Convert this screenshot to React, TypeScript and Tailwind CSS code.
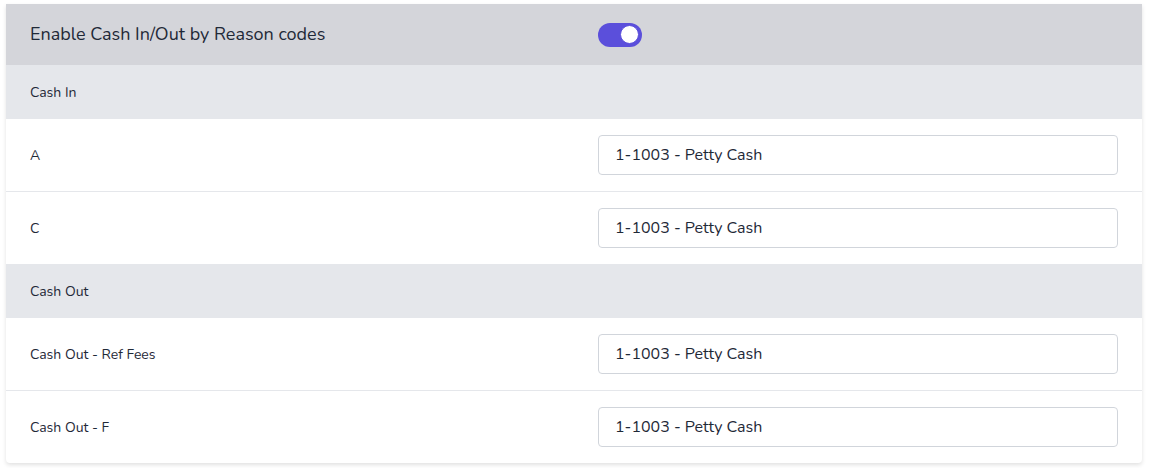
import React from "react";

const font = { fontFamily: "Nunito, Lato, 'Noto Sans', sans-serif" };

function Toggle() {
  return (
    <div className="relative h-[24px] w-[44px] rounded-full bg-[#5b4fdb]">
      <div className="absolute right-[3px] top-[2.5px] h-[19px] w-[19px] rounded-full border border-[#5b4fdb] bg-white" />
    </div>
  );
}

function Row({ label, last }: { label: string; last?: boolean }) {
  return (
    <div className={`grid grid-cols-[568px_1fr] items-center pl-6 ${last ? "h-[72px]" : "h-[73px] border-b border-[#e5e7eb]"}`}>
      <div className="text-[14px] text-[#1f2937]">{label}</div>
      <div className="flex h-[40px] w-[520px] items-center rounded-[4px] border border-[#d1d5db] bg-white px-4 text-[16px] text-[#1f2937]">
        1-1003 - Petty Cash
      </div>
    </div>
  );
}

function Section({ label }: { label: string }) {
  return (
    <div className="flex h-[54px] items-center bg-[#e5e7eb] pl-6 text-[14px] text-[#1f2937]">{label}</div>
  );
}

export default function App() {
  return (
    <div className="min-h-[468px] w-[1149px] bg-white pl-[6px] pt-[4px]" style={font}>
      <div className="w-[1136px] overflow-hidden rounded-b-[4px] bg-white shadow-[0_2px_4px_rgba(0,0,0,0.12)]">
        <div className="grid h-[61px] grid-cols-[568px_1fr] items-center bg-[#d4d5da] pl-6">
          <div className="text-[18px] text-[#1f2937]">Enable Cash In/Out by Reason codes</div>
          <Toggle />
        </div>
        <Section label="Cash In" />
        <Row label="A" />
        <Row label="C" last />
        <Section label="Cash Out" />
        <Row label="Cash Out - Ref Fees" />
        <Row label="Cash Out - F" last />
      </div>
    </div>
  );
}
